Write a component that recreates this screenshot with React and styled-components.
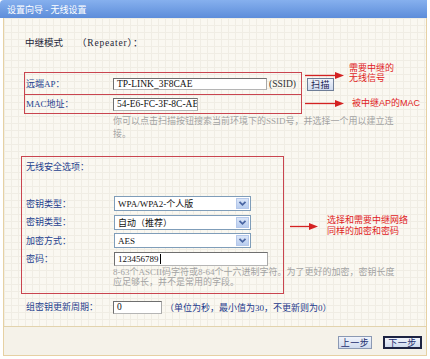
import React from "react";
import styled, { createGlobalStyle } from "styled-components";

const Global = createGlobalStyle`
  html, body { margin: 0; padding: 0; background: #ffffff; }
  * { box-sizing: border-box; }
  body { font-family: "Noto Sans CJK SC", "Liberation Sans", sans-serif; }
`;

const CJK = `"Liberation Serif", "Noto Sans CJK SC", serif`;

const Window = styled.div`
  position: relative;
  width: 430px;
  height: 359px;
  display: flex;
  flex-direction: column;
  overflow: hidden;
  background: #ffffff;
  font-family: ${CJK};
  font-size: 9px;
`;

const Header = styled.div`
  height: 18px;
  margin-right: 3px;
  display: flex;
  align-items: center;
  padding-left: 7px;
  color: #ffffff;
  font-size: 9px;
  border-top-left-radius: 4px;
  background: linear-gradient(#86b0ee, #5d8dda);
`;

const Panel = styled.div`
  margin: 0 3px 3px 3px;
  height: 338px;
  border: 1px solid #e6d1a3;
  border-top: none;
  display: flex;
  flex-direction: column;
  background-color: #faf8f1;
  background-image: linear-gradient(#f0ede4 1px, transparent 1px),
    linear-gradient(90deg, #f0ede4 1px, transparent 1px);
  background-size: 7px 7px;
`;

const Body = styled.div`
  flex: 1;
  padding: 19px 0 0 17px;
  display: flex;
  flex-direction: column;
  align-items: flex-start;
`;

const ModeTitle = styled.div`
  margin-left: 4px;
  height: 12px;
  line-height: 12px;
  color: #1e2638;
  display: flex;
  white-space: nowrap;
  font-size: 9.5px;
`;

const ModeSub = styled.span`
  margin-left: 14px;
  letter-spacing: 0.8px;
`;

const RedBox = styled.div`
  border: 1px solid #c9454f;
  width: ${(p) => p.$w}px;
  margin: ${(p) => p.$m};
  display: flex;
  flex-direction: column;
  padding: ${(p) => p.$pad || "0"};
`;

const ApRow = styled.div`
  height: ${(p) => p.$h}px;
  display: flex;
  align-items: center;
  border-top: ${(p) => (p.$divider ? "1px solid #c9454f" : "none")};
  white-space: nowrap;
`;

const Label = styled.div`
  width: ${(p) => p.$w}px;
  padding-left: ${(p) => p.$pl || 0}px;
  color: #24408e;
  flex: none;
  line-height: 12px;
  white-space: nowrap;
`;

const TextInput = styled.div`
  width: ${(p) => p.$w}px;
  height: ${(p) => p.$h}px;
  border: 1px solid #6f6f6f;
  border-right-color: #a9a9a9;
  border-bottom-color: #b5b5b5;
  background: #ffffff;
  display: flex;
  align-items: center;
  padding-left: 3px;
  font-family: "Liberation Serif", "Noto Sans CJK SC", serif;
  font-size: ${(p) => p.$fs || 9.5}px;
  color: #111;
  flex: none;
  overflow: hidden;
  white-space: nowrap;
`;

const Caret = styled.span`
  display: inline-block;
  width: 1px;
  height: 10px;
  background: #000;
  margin-left: 1px;
`;

const Suffix = styled.span`
  margin-left: 2px;
  font-family: "Liberation Serif", serif;
  font-size: 9.5px;
  color: #333;
`;

const Help = styled.div`
  margin: ${(p) => p.$m};
  line-height: ${(p) => p.$lh}px;
  color: #a3a3a3;
  white-space: nowrap;
  font-size: 9px;
`;

const SecTitle = styled.div`
  padding-left: 4px;
  height: 12px;
  line-height: 12px;
  color: #24408e;
`;

const Form = styled.div`
  margin-top: 23px;
  display: flex;
  flex-direction: column;
  gap: 3.5px;
`;

const FormRow = styled.div`
  height: ${(p) => p.$h || 15}px;
  display: flex;
  align-items: center;
`;

const Select = styled.div`
  width: 137px;
  height: 15px;
  border: 1px solid #7f9db9;
  background: #ffffff;
  display: flex;
  align-items: center;
  justify-content: space-between;
  padding-left: 3px;
  color: #111;
  font-size: 9px;
  flex: none;
`;

const DropBtn = styled.div`
  width: 13px;
  height: 11px;
  margin-right: 1px;
  background: linear-gradient(#dbe6f8, #b9cdef);
  border: 1px solid #b5c8ea;
  display: flex;
  align-items: center;
  justify-content: center;
`;

const GroupRow = styled.div`
  margin: 7px 0 0 5px;
  height: 13px;
  display: flex;
  align-items: center;
  white-space: nowrap;
`;

const Note = styled.span`
  margin-left: 3px;
  color: #1e3a8c;
  font-size: 9px;
`;

const Footer = styled.div`
  height: 29px;
  border-top: 1px solid #e2d3ad;
  background: #f5f2e9;
  display: flex;
  justify-content: flex-end;
  align-items: flex-start;
  padding: 9px 4px 0 0;
  gap: 11px;
`;

const Button = styled.div`
  width: ${(p) => p.$w}px;
  height: 13px;
  border: ${(p) => (p.$primary ? "2px solid #1d2342" : "1px solid #8b99b3")};
  background: linear-gradient(#f1f4fb, #cfdaee);
  color: #1c2d6e;
  font-size: 9px;
  display: flex;
  align-items: center;
  justify-content: center;
  letter-spacing: 0.5px;
`;

const ScanBtn = styled(Button)`
  position: absolute;
  left: 307px;
  top: 78px;
  width: 27px;
  height: 13px;
  border: 1px solid #6e7d96;
  color: #1a2050;
`;

const ArrowSvg = styled.svg`
  position: absolute;
  left: ${(p) => p.$x}px;
  top: ${(p) => p.$y}px;
`;

const RedNote = styled.div`
  position: absolute;
  left: ${(p) => p.$x}px;
  top: ${(p) => p.$y}px;
  color: #e0221d;
  font-size: 9px;
  line-height: ${(p) => p.$lh || 10}px;
  white-space: nowrap;
  font-family: "Liberation Sans", "Noto Sans CJK SC", sans-serif;
`;

const NoteLine = styled.div`
  height: ${(p) => p.$h}px;
  line-height: ${(p) => p.$h}px;
  overflow: visible;
`;

function Arrow({ x, y, w }) {
  return (
    <ArrowSvg $x={x} $y={y - 4.5} width={w} height={9} viewBox={`0 0 ${w} 9`}>
      <line x1="0" y1="4.5" x2={w - 7} y2="4.5" stroke="#d42222" strokeWidth="1.3" />
      <polygon points={`${w - 9},1 ${w},4.5 ${w - 9},8`} fill="#d42222" />
    </ArrowSvg>
  );
}

function Chevron() {
  return (
    <svg width="9" height="7" viewBox="0 0 9 7">
      <path d="M1.5 1.8 L4.5 4.8 L7.5 1.8" fill="none" stroke="#4a66a3" strokeWidth="1.8" />
    </svg>
  );
}

function Dropdown({ children }) {
  return (
    <Select>
      <span>{children}</span>
      <DropBtn>
        <Chevron />
      </DropBtn>
    </Select>
  );
}

export default function App() {
  return (
    <>
      <Global />
      <Window>
        <Header>设置向导 - 无线设置</Header>
        <Panel>
          <Body>
            <ModeTitle>
              <span>中继模式</span>
              <ModeSub>（Repeater）：</ModeSub>
            </ModeTitle>

            <RedBox $w={278} $m="23px 0 0 3px">
              <ApRow $h={21}>
                <Label $w={88} $pl={1}>远端AP：</Label>
                <TextInput $w={154} $h={12}>TP-LINK_3F8CAE</TextInput>
                <Suffix>(SSID)</Suffix>
              </ApRow>
              <ApRow $h={19} $divider>
                <Label $w={88} $pl={1}>MAC地址：</Label>
                <TextInput $w={85} $h={13}>54-E6-FC-3F-8C-AE</TextInput>
              </ApRow>
            </RedBox>

            <Help $m="1px 0 0 92px" $lh={13}>
              你可以点击扫描按钮搜索当前环境下的SSID号，并选择一个用以建立连
              <br />
              接。
            </Help>

            <RedBox $w={263} $m="15px 0 0 0" $pad="4px 0 5px 0">
              <SecTitle>无线安全选项：</SecTitle>
              <Form>
                <FormRow>
                  <Label $w={92} $pl={4}>密钥类型：</Label>
                  <Dropdown>WPA/WPA2-个人版</Dropdown>
                </FormRow>
                <FormRow>
                  <Label $w={92} $pl={4}>密钥类型：</Label>
                  <Dropdown>自动（推荐）</Dropdown>
                </FormRow>
                <FormRow>
                  <Label $w={92} $pl={4}>加密方式：</Label>
                  <Dropdown>AES</Dropdown>
                </FormRow>
                <FormRow $h={14}>
                  <Label $w={92} $pl={4}>密码：</Label>
                  <TextInput $w={154} $h={14} $fs={9}>
                    123456789
                    <Caret />
                  </TextInput>
                </FormRow>
              </Form>
              <Help $m="1px 0 0 91px" $lh={10.5}>
                8-63个ASCII码字符或8-64个十六进制字符。为了更好的加密，密钥长度
                <br />
                应足够长，并不是常用的字段。
              </Help>
            </RedBox>

            <GroupRow>
              <Label $w={87}>组密钥更新周期：</Label>
              <TextInput $w={49} $h={13}>0</TextInput>
              <Note>（单位为秒，最小值为30，不更新则为0）</Note>
            </GroupRow>
          </Body>
          <Footer>
            <Button $w={34}>上一步</Button>
            <Button $w={39} $primary>下一步</Button>
          </Footer>
        </Panel>

        <ScanBtn as="div">扫描</ScanBtn>
        <Arrow x={305} y={75.5} w={39} />
        <RedNote $x={349} $y={63}>
          <NoteLine $h={10}>需要中继的</NoteLine>
          <NoteLine $h={10}>无线信号</NoteLine>
        </RedNote>
        <Arrow x={305} y={103} w={39} />
        <RedNote $x={352} $y={98}>被中继AP的MAC</RedNote>
        <Arrow x={290} y={226.5} w={28} />
        <RedNote $x={327} $y={215}>
          <NoteLine $h={11}>选择和需要中继网络</NoteLine>
          <NoteLine $h={11}>同样的加密和密码</NoteLine>
        </RedNote>
      </Window>
    </>
  );
}
